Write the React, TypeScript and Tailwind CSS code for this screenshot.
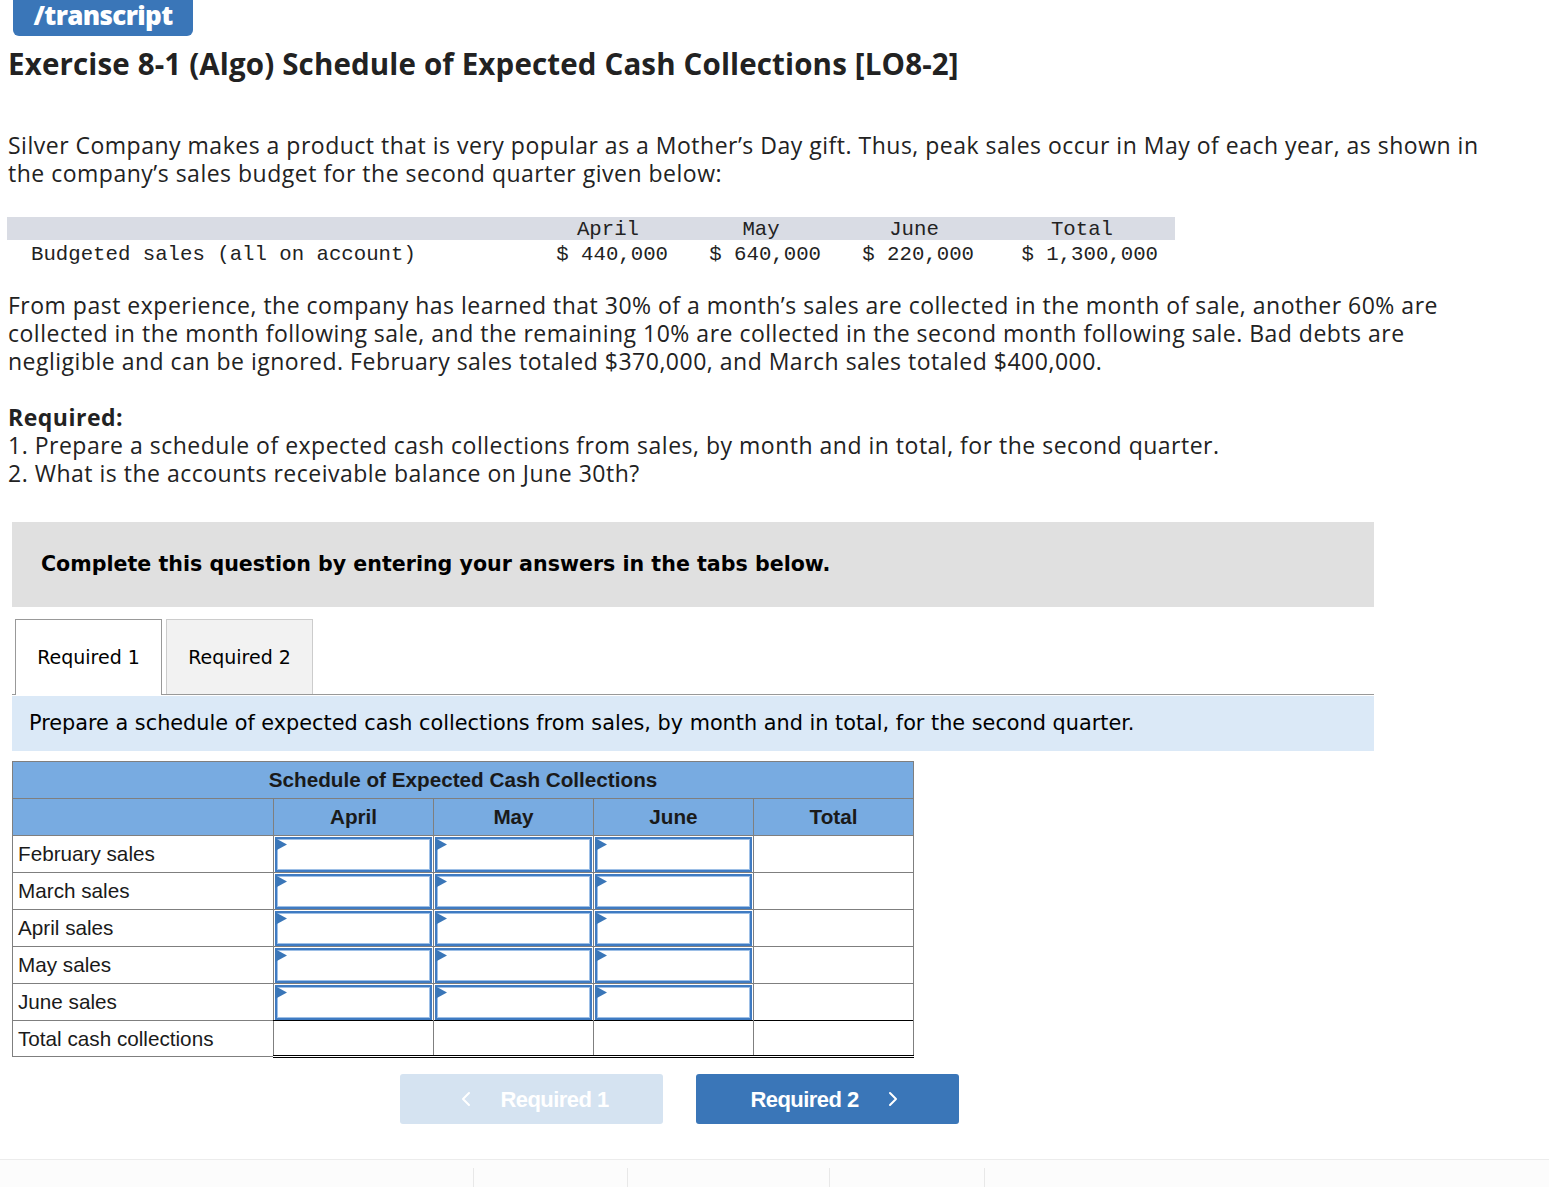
import { ChevronLeft, ChevronRight } from 'lucide-react';

const rows = ['February sales', 'March sales', 'April sales', 'May sales', 'June sales'];

function InputCell() {
  return (
    <td className="h-[37px] w-[160px] border border-[#7f7f7f] p-0">
      <div className="relative mx-px h-[35px] border-2 border-[#3f7bc2] bg-white shadow-[inset_0_0_0_1px_#9dbfe6]">
        <svg className="absolute -left-[2px] -top-[1px] z-10" width="12" height="13" viewBox="0 0 12 13">
          <path d="M0 0 L12 6.5 L0 13 Z" fill="#3a76b8" />
        </svg>
      </div>
    </td>
  );
}

export default function App() {
  return (
    <div className="min-h-screen bg-white text-[#222]" style={{ fontFamily: '"Open Sans", Lato, sans-serif' }}>
      <div className="ml-[13px] flex h-[36px] w-[180px] items-center justify-center rounded-b-md bg-[#3a76b8]">
        <span className="-mt-[5px] text-[26px] font-extrabold tracking-tight text-white">
          /transcript
        </span>
      </div>

      <div className="px-[8px]">
        <h1 className="mt-[10px] whitespace-nowrap text-[29.5px] font-bold leading-[36px] tracking-[0.15px] text-[#222]">
          Exercise 8-1 (Algo) Schedule of Expected Cash Collections [LO8-2]
        </h1>

        <div className="mt-[49px] whitespace-nowrap text-[23px] leading-[28px] tracking-[0.5px]">
          <div>
            Silver Company makes a product that is very popular as a Mother’s Day gift. Thus, peak sales occur in May of each year, as shown in
          </div>
          <div>the company’s sales budget for the second quarter given below:</div>
        </div>

        <div
          className="-ml-[1px] mt-[30px] text-[20.7px] text-[#222]"
          style={{ fontFamily: '"Liberation Mono", "Courier New", monospace' }}
        >
          <div className="flex h-[23px] w-[1168px] overflow-hidden bg-[#d9dce4] pt-[2px] leading-[21px]">
            <div className="w-[538px] shrink-0" />
            <div className="w-[126px] shrink-0 text-center">April</div>
            <div className="w-[180px] shrink-0 text-center">May</div>
            <div className="w-[126px] shrink-0 text-center">June</div>
            <div className="w-[210px] shrink-0 text-center">Total</div>
          </div>
          <div className="flex h-[26px] pt-[3px] leading-[23px]">
            <div className="w-[538px] shrink-0 pl-[24px]">Budgeted sales (all on account)</div>
            <div className="w-[123px] shrink-0 text-right">$ 440,000</div>
            <div className="w-[153px] shrink-0 text-right">$ 640,000</div>
            <div className="w-[153px] shrink-0 text-right">$ 220,000</div>
            <div className="w-[184px] shrink-0 text-right">$ 1,300,000</div>
          </div>
        </div>

        <div className="mt-[25px] whitespace-nowrap text-[23px] leading-[28px] tracking-[0.5px]">
          <div>
            From past experience, the company has learned that 30% of a month’s sales are collected in the month of sale, another 60% are
          </div>
          <div>
            collected in the month following sale, and the remaining 10% are collected in the second month following sale. Bad debts are
          </div>
          <div>negligible and can be ignored. February sales totaled $370,000, and March sales totaled $400,000.</div>
        </div>

        <div className="mt-[28px] whitespace-nowrap text-[23px] leading-[28px] tracking-[0.5px]">
          <div className="font-bold">Required:</div>
          <div>1. Prepare a schedule of expected cash collections from sales, by month and in total, for the second quarter.</div>
          <div>2. What is the accounts receivable balance on June 30th?</div>
        </div>
      </div>

      <div className="ml-[12px] w-[1362px]" style={{ fontFamily: '"DejaVu Sans", Verdana, sans-serif' }}>
        <div className="mt-[35px] flex h-[85px] items-center bg-[#e0e0e0] pl-[29px]">
          <span className="whitespace-nowrap text-[20.6px] font-bold text-black">
            Complete this question by entering your answers in the tabs below.
          </span>
        </div>

        <div className="mt-[12px] flex items-end gap-[4px] border-b border-[#999] pl-[3px]">
          <div className="-mb-px flex h-[76px] w-[147px] items-center justify-center border border-b-0 border-[#999] bg-white text-[19px] text-black">
            Required 1
          </div>
          <div className="flex h-[75px] w-[147px] items-center justify-center border border-b-0 border-[#ccc] bg-[#f2f2f2] text-[19px] text-black">
            Required 2
          </div>
        </div>

        <div className="mt-px flex h-[55px] items-center whitespace-nowrap bg-[#dbe9f7] pl-[17px] text-[20.8px] text-black">
          Prepare a schedule of expected cash collections from sales, by month and in total, for the second quarter.
        </div>
      </div>

      <div className="ml-[12px] mt-[10px]" style={{ fontFamily: '"Liberation Sans", Arial, sans-serif' }}>
        <table className="border-collapse text-[20.7px] text-[#1a1a1a]">
          <thead>
            <tr className="bg-[#78abe1]">
              <th colSpan={5} className="h-[37px] border border-[#7f7f7f] p-0 text-center font-bold">
                Schedule of Expected Cash Collections
              </th>
            </tr>
            <tr className="bg-[#78abe1]">
              <th className="h-[37px] w-[261px] border border-[#7f7f7f] p-0" />
              <th className="w-[160px] border border-[#7f7f7f] p-0 font-bold">April</th>
              <th className="w-[160px] border border-[#7f7f7f] p-0 font-bold">May</th>
              <th className="w-[160px] border border-[#7f7f7f] p-0 font-bold">June</th>
              <th className="w-[160px] border border-[#7f7f7f] p-0 font-bold">Total</th>
            </tr>
          </thead>
          <tbody>
            {rows.map((r) => (
              <tr key={r}>
                <td className="h-[37px] border border-[#7f7f7f] px-[5px] py-0">{r}</td>
                <InputCell />
                <InputCell />
                <InputCell />
                <td className="border border-[#7f7f7f] p-0" />
              </tr>
            ))}
            <tr>
              <td className="h-[36px] border border-[#7f7f7f] px-[5px] py-0">Total cash collections</td>
              <td className="border border-double border-x-[#7f7f7f] border-b-[3px] border-t-black border-b-black p-0" />
              <td className="border border-double border-x-[#7f7f7f] border-b-[3px] border-t-black border-b-black p-0" />
              <td className="border border-double border-x-[#7f7f7f] border-b-[3px] border-t-black border-b-black p-0" />
              <td className="border border-double border-x-[#7f7f7f] border-b-[3px] border-t-black border-b-black p-0" />
            </tr>
          </tbody>
        </table>
      </div>

      <div className="ml-[400px] mt-[16px] flex gap-[33px]" style={{ fontFamily: '"Liberation Sans", Arial, sans-serif' }}>
        <button className="flex h-[50px] w-[263px] items-center justify-center gap-[22px] rounded-[3px] bg-[#d5e3f1] text-[22px] font-bold text-white">
          <ChevronLeft size={24} strokeWidth={2} />
          <span className="tracking-tight">Required 1</span>
        </button>
        <button className="flex h-[50px] w-[263px] items-center justify-center gap-[22px] rounded-[3px] bg-[#3a76b8] text-[22px] font-bold text-white">
          <span className="tracking-tight">Required 2</span>
          <ChevronRight size={24} strokeWidth={2} />
        </button>
      </div>

      <div className="mt-[35px] h-[28px] border-t border-[#ececec] bg-[#fcfcfc]">
        <div className="flex h-full pt-[8px]">
          <div className="w-[474px] border-r border-[#e8e8e8]" />
          <div className="w-[154px] border-r border-[#e8e8e8]" />
          <div className="w-[202px] border-r border-[#e8e8e8]" />
          <div className="w-[155px] border-r border-[#e8e8e8]" />
        </div>
      </div>
    </div>
  );
}
